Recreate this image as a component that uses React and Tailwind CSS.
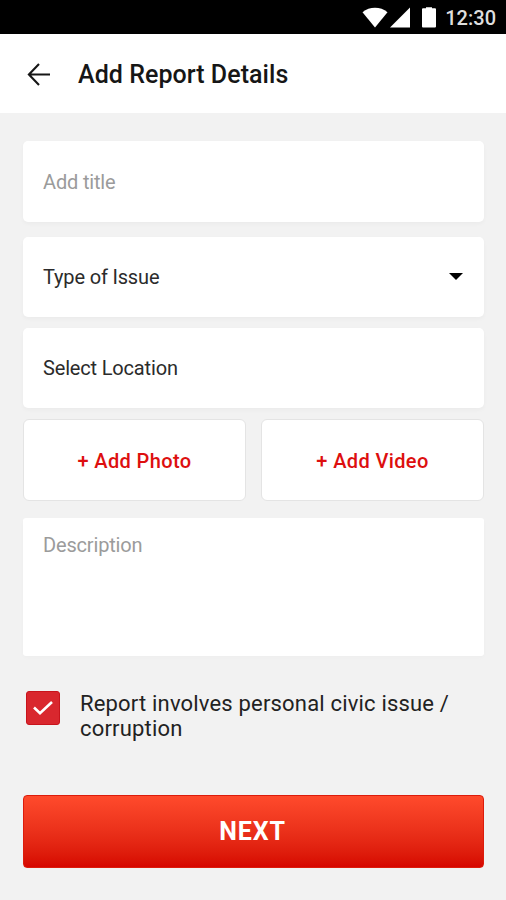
import React, { useState } from "react";

const StatusBar = () => {
  return (
    <div className="flex h-[34px] items-center justify-end bg-black pr-[10px] text-white">
      <svg className="h-[21px] w-[26px]" viewBox="0 0 26 21" fill="currentColor">
        <path d="M0.5 5.2C7.5 -0.7 18.5 -0.7 25.5 5.2L13 20.5Z" />
      </svg>
      <svg className="ml-[2px] h-[21px] w-[20px]" viewBox="0 0 20 21" fill="currentColor">
        <path d="M20 0.5V20.5H0Z" />
      </svg>
      <svg className="ml-[12px] h-[21px] w-[14px]" viewBox="0 0 14 21" fill="currentColor">
        <path d="M4 0.3H10V1.2H13Q14 1.2 14 2.2V19.5Q14 20.5 13 20.5H1Q0 20.5 0 19.5V2.2Q0 1.2 1 1.2H4Z" />
      </svg>
      <span className="ml-[9px] pt-[2px] text-[20px] leading-[34px] font-medium text-[#dedede]">12:30</span>
    </div>
  );
};

const Header = () => {
  return (
    <header className="flex h-[79px] items-center bg-white pl-[27px]">
      <button aria-label="Back">
        <svg className="h-[24px] w-[24px]" viewBox="0 0 24 24" fill="none" stroke="#161616" strokeWidth="2.1">
          <path d="M23 12.5H2.5M12 2L1.9 12.5L12 23" />
        </svg>
      </button>
      <h1 className="ml-[27px] pt-[3px] text-[25px] leading-[30px] font-medium tracking-[0.05px] text-[#161616]">
        Add Report Details
      </h1>
    </header>
  );
};

const App = () => {
  const [checked, setChecked] = useState(true);

  return (
    <div className="h-[900px] w-[506px] bg-[#f2f2f2] font-['Roboto',sans-serif]">
      <StatusBar />
      <Header />
      <main className="flex flex-col pt-[28px] pr-[22px] pl-[23px]">
        <input
          className="h-[81px] rounded-[5px] bg-white px-5 text-[20px] tracking-[-0.17px] shadow-[0_2px_4px_rgba(0,0,0,0.03)] outline-none placeholder:text-[#9b9b9b]"
          placeholder="Add title"
        />

        <button className="mt-[15px] flex h-[80px] items-center justify-between rounded-[5px] bg-white pr-[21px] pl-5 text-[20px] tracking-[-0.17px] text-[#2b2b2b] shadow-[0_2px_4px_rgba(0,0,0,0.03)]">
          Type of Issue
          <svg className="mb-px h-[7px] w-[14px]" viewBox="0 0 14 7" fill="#000">
            <path d="M0 0H14L7 7Z" />
          </svg>
        </button>

        <button className="mt-[11px] flex h-[80px] items-center rounded-[5px] bg-white px-5 text-[20px] tracking-[-0.17px] text-[#2b2b2b] shadow-[0_2px_4px_rgba(0,0,0,0.03)]">
          Select Location
        </button>

        <div className="mt-[11px] grid grid-cols-2 gap-[15px] text-[20px] font-medium tracking-[0.38px] text-[#dd0f0f]">
          <button className="h-[82px] rounded-[6px] border border-[#e4e4e4] bg-white pt-[2px]">+ Add Photo</button>
          <button className="h-[82px] rounded-[6px] border border-[#e4e4e4] bg-white pt-[2px]">+ Add Video</button>
        </div>

        <textarea
          className="mt-[17px] h-[138px] resize-none rounded-[3px] bg-white px-5 py-[14px] text-[20px] leading-[26px] tracking-[-0.17px] shadow-[0_2px_4px_rgba(0,0,0,0.02)] outline-none placeholder:text-[#9b9b9b]"
          placeholder="Description"
        />

        <div className="mt-[35px] flex pl-[3px]">
          <button
            className="flex h-[34px] w-[34px] items-center justify-center rounded-[3px] border border-[#c8141c] bg-[#d9272e] pr-px"
            onClick={() => setChecked(!checked)}
          >
            {checked && (
              <svg className="h-[14px] w-[20px]" viewBox="0 0 20 14" fill="none" stroke="#fff" strokeWidth="2.6">
                <path d="M1 6.5L7 12.2L19 1" />
              </svg>
            )}
          </button>
          <p className="ml-[20px] w-[385px] text-[22px] leading-[25px] tracking-[0.18px] text-[#222]">
            Report involves personal civic issue / corruption
          </p>
        </div>

        <button className="mt-[54px] h-[73px] rounded-[4px] border border-[#dc1c0c] bg-linear-to-b from-[#ff4a2c] to-[#d60500] pr-[2px] text-[25px] font-bold tracking-[0.9px] text-white">
          NEXT
        </button>
      </main>
    </div>
  );
};

export default App;
